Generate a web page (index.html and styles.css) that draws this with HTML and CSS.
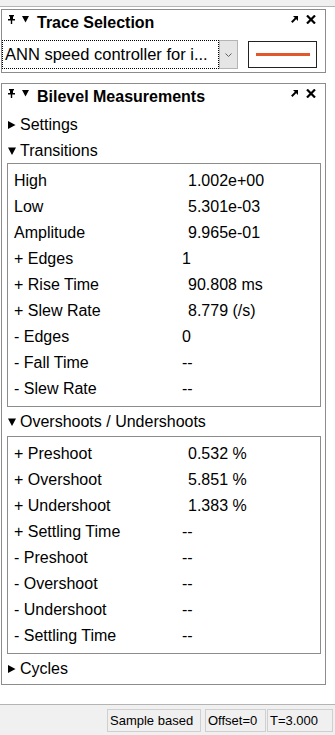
FILE: index.html
```html
<!DOCTYPE html>
<html lang="en">

<head>
    <meta charset="UTF-8">
    <meta name="viewport" content="width=device-width, initial-scale=1.0">
    <title>Bilevel Measurements</title>
    <link rel="stylesheet" href="styles.css">
</head>

<body>
    <div class="top-strip"></div>

    <section class="panel panel-trace">
        <div class="panel-head">
            <svg class="icon pin" width="7" height="9" viewBox="0 0 7 9"><rect x="1" y="0" width="5" height="1.4" /><rect x="2" y="1" width="3" height="3" /><rect x="0" y="4" width="7" height="1.5" /><rect x="2.8" y="5" width="1.4" height="4" /></svg>
            <svg class="icon caret" width="7" height="7" viewBox="0 0 7 7"><polygon points="0,0 7,0 3.5,6.5" /></svg>
            <h1 class="panel-title">Trace Selection</h1>
            <svg class="icon undock" width="7" height="7" viewBox="0 0 7 7"><polygon points="2,0 7,0 7,5" /><line x1="5.6" y1="1.4" x2="0.8" y2="6.2" stroke="#000" stroke-width="2" /></svg>
            <svg class="icon close" width="10" height="9" viewBox="0 0 10 9"><path d="M1 0.5 L9 8.5 M9 0.5 L1 8.5" stroke="#000" stroke-width="2.2" /></svg>
        </div>
        <div class="trace-row">
            <div class="select">
                <span class="select-text">ANN speed controller for i...</span>
                <span class="select-btn"><svg width="7" height="4" viewBox="0 0 7 4"><path d="M0.5 0.5 L3.5 3.5 L6.5 0.5" fill="none" stroke="#606060" stroke-width="1" /></svg></span>
            </div>
            <div class="swatch"><span class="swatch-line"></span></div>
        </div>
    </section>

    <section class="panel panel-measure">
        <div class="panel-head">
            <svg class="icon pin" width="7" height="9" viewBox="0 0 7 9"><rect x="1" y="0" width="5" height="1.4" /><rect x="2" y="1" width="3" height="3" /><rect x="0" y="4" width="7" height="1.5" /><rect x="2.8" y="5" width="1.4" height="4" /></svg>
            <svg class="icon caret" width="7" height="7" viewBox="0 0 7 7"><polygon points="0,0 7,0 3.5,6.5" /></svg>
            <h1 class="panel-title">Bilevel Measurements</h1>
            <svg class="icon undock" width="7" height="7" viewBox="0 0 7 7"><polygon points="2,0 7,0 7,5" /><line x1="5.6" y1="1.4" x2="0.8" y2="6.2" stroke="#000" stroke-width="2" /></svg>
            <svg class="icon close" width="10" height="9" viewBox="0 0 10 9"><path d="M1 0.5 L9 8.5 M9 0.5 L1 8.5" stroke="#000" stroke-width="2.2" /></svg>
        </div>

        <div class="group">
            <svg class="tri" width="8" height="8" viewBox="0 0 8 8"><polygon points="0,0 7.5,4 0,8" /></svg>
            Settings
        </div>

        <div class="group">
            <svg class="tri" width="8" height="8" viewBox="0 0 8 8"><polygon points="0,0.5 8,0.5 4,8" /></svg>
            Transitions
        </div>
        <div class="box">
            <div class="row"><span>High</span><span class="num">1.002e+00</span></div>
            <div class="row"><span>Low</span><span class="num">5.301e-03</span></div>
            <div class="row"><span>Amplitude</span><span class="num">9.965e-01</span></div>
            <div class="row"><span>+ Edges</span><span>1</span></div>
            <div class="row"><span>+ Rise Time</span><span class="num">90.808 ms</span></div>
            <div class="row"><span>+ Slew Rate</span><span class="num">8.779 (/s)</span></div>
            <div class="row"><span>- Edges</span><span>0</span></div>
            <div class="row"><span>- Fall Time</span><span>--</span></div>
            <div class="row"><span>- Slew Rate</span><span>--</span></div>
        </div>

        <div class="group">
            <svg class="tri" width="8" height="8" viewBox="0 0 8 8"><polygon points="0,0.5 8,0.5 4,8" /></svg>
            Overshoots / Undershoots
        </div>
        <div class="box box-shoots">
            <div class="row"><span>+ Preshoot</span><span class="num">0.532 %</span></div>
            <div class="row"><span>+ Overshoot</span><span class="num">5.851 %</span></div>
            <div class="row"><span>+ Undershoot</span><span class="num">1.383 %</span></div>
            <div class="row"><span>+ Settling Time</span><span>--</span></div>
            <div class="row"><span>- Preshoot</span><span>--</span></div>
            <div class="row"><span>- Overshoot</span><span>--</span></div>
            <div class="row"><span>- Undershoot</span><span>--</span></div>
            <div class="row"><span>- Settling Time</span><span>--</span></div>
        </div>

        <div class="group">
            <svg class="tri" width="8" height="8" viewBox="0 0 8 8"><polygon points="0,0 7.5,4 0,8" /></svg>
            Cycles
        </div>
    </section>

    <div class="statusbar">
        <div class="cell cell-mode">Sample based</div>
        <div class="cell cell-offset">Offset=0</div>
        <div class="cell cell-time">T=3.000</div>
    </div>
</body>

</html>
```

FILE: styles.css
```css
html,
body {
    margin: 0;
}

body {
    font-family: "Liberation Sans", Arial, sans-serif;
    font-size: 16px;
    color: #000;
    background: #fff;
    height: 100vh;
    display: flex;
    flex-direction: column;
    overflow: hidden;
}

.top-strip {
    flex: none;
    height: 6px;
    background: #f0f0f0;
    border-bottom: 1px solid #b4b4b4;
}

.panel {
    flex: none;
    box-sizing: border-box;
    width: 325px;
    margin: 2px 0 0 1px;
    border: 1px solid #8c8c8c;
}

.panel-measure {
    margin-top: 10px;
    padding-bottom: 4px;
}

.panel-head {
    display: flex;
    height: 26px;
}

.icon {
    flex: none;
    margin-top: 5px;
}

.pin {
    margin-left: 6px;
}

.caret {
    margin-left: 7px;
    margin-top: 6px;
}

.panel-title {
    flex: 1;
    margin: 0 0 0 8px;
    font-size: 16px;
    font-weight: bold;
    line-height: 26px;
}

.undock {
    margin-top: 6px;
    margin-right: 8px;
}

.close {
    margin-top: 5px;
    margin-right: 9px;
}

/* trace selection */
.trace-row {
    display: flex;
    align-items: center;
    gap: 10px;
    padding: 4px 8px 3px 0;
}

.select {
    display: flex;
    width: 236px;
    height: 29px;
    box-sizing: border-box;
}

.select-text {
    flex: 1;
    box-sizing: border-box;
    border: 1px dotted #000;
    padding-left: 2px;
    font-size: 16.5px;
    line-height: 27px;
    white-space: nowrap;
    overflow: hidden;
}

.select-btn {
    width: 19px;
    box-sizing: border-box;
    background: #e5e5e5;
    border: 1px solid #b4b4b4;
    display: flex;
    align-items: center;
    justify-content: center;
}

.swatch {
    width: 69px;
    height: 27px;
    box-sizing: border-box;
    border: 1px solid #222;
    display: flex;
    align-items: center;
    justify-content: center;
}

.swatch-line {
    width: 54px;
    height: 3px;
    background: #e0582b;
}

/* measurements */
.group {
    display: flex;
    align-items: center;
    height: 22px;
    margin-top: 4px;
    padding-left: 6px;
}

.tri {
    margin-right: 4px;
}

.box {
    margin: 1px 4px 0 5px;
    border: 1px solid #8c8c8c;
    padding: 4px 0 4px 6px;
}

.box-shoots {
    margin-top: 3px;
}

.row {
    display: grid;
    grid-template-columns: 168px 1fr;
    height: 26px;
    line-height: 26px;
    white-space: nowrap;
}

.num {
    padding-left: 6px;
}

/* status bar */
.statusbar {
    margin-top: auto;
    flex: none;
    height: 31px;
    box-sizing: border-box;
    border-top: 1px solid #b4b4b4;
    background: #f0f0f0;
    display: flex;
    justify-content: flex-end;
    padding: 4px 2px 0 0;
}

.cell {
    box-sizing: border-box;
    height: 23px;
    border: 1px solid #cfcfcf;
    padding-left: 2px;
    font-size: 13px;
    line-height: 21px;
    white-space: nowrap;
}

.cell-mode {
    width: 94px;
}

.cell-offset {
    width: 61px;
    margin-left: 4px;
}

.cell-time {
    width: 66px;
    margin-left: 1px;
}
```
